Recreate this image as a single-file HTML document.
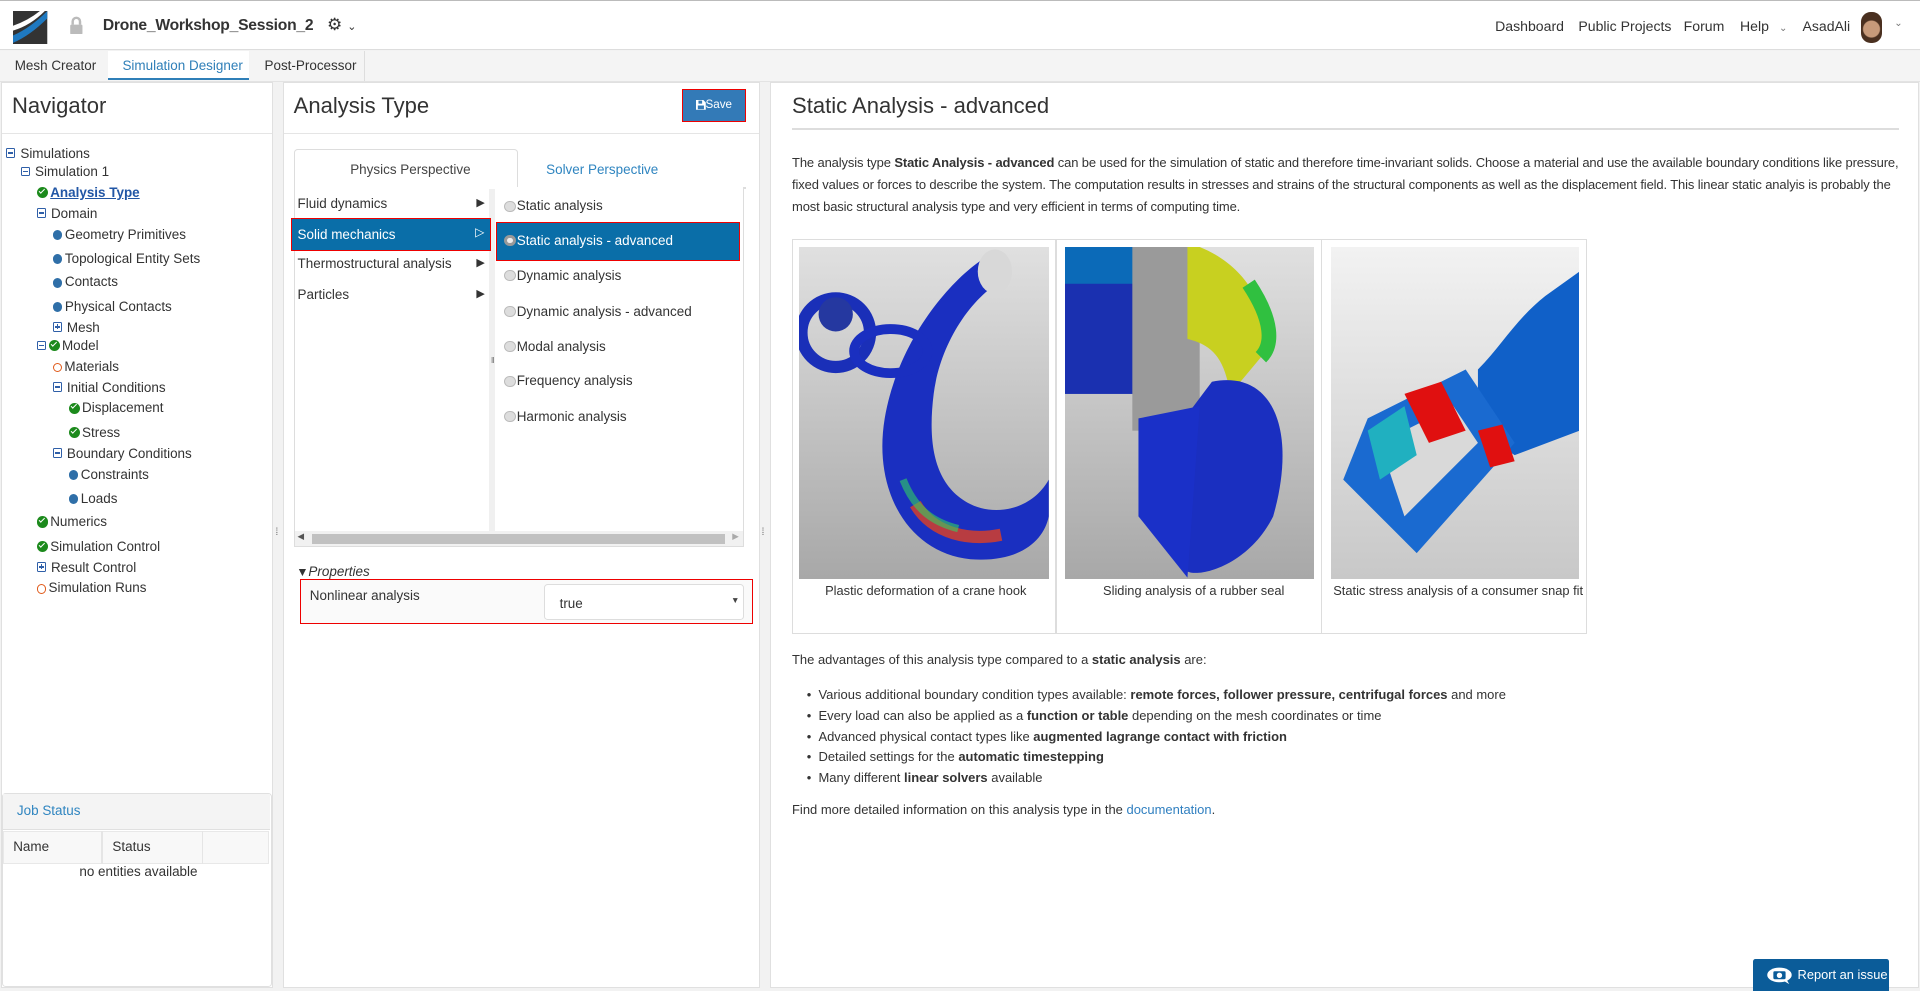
<!DOCTYPE html>
<html><head><meta charset="utf-8">
<style>
html,body{margin:0;padding:0;}
body{width:1568px;height:809px;overflow:hidden;zoom:1.22449;background:#f2f2f2;font-family:"Liberation Sans",sans-serif;font-size:11px;color:#333;position:relative;}
.a{position:absolute;white-space:nowrap;}
.top{position:absolute;left:0;top:0;width:1568px;height:41px;background:#fff;border-bottom:1px solid #ddd;border-top:1px solid #bbb;box-sizing:border-box;}
.tabs{position:absolute;left:0;top:42px;width:1568px;height:24px;background:#f4f4f4;border-bottom:1px solid #e3e3e3;}
.panel{position:absolute;background:#fff;border:1px solid #e0e0e0;box-sizing:border-box;}
.h{font-size:18px;color:#333;}
.ti{position:absolute;white-space:nowrap;font-size:11px;}
.dot{display:inline-block;width:8px;height:8px;border-radius:50%;background:#2f6fa8;vertical-align:-1px;margin-right:2px;}
.ok{display:inline-block;width:9px;height:9px;border-radius:50%;background:#1c8a1c;vertical-align:-1px;margin-right:2px;position:relative;}
.ok:after{content:"";position:absolute;left:2px;top:1.5px;width:4px;height:2px;border-left:1.5px solid #fff;border-bottom:1.5px solid #fff;transform:rotate(-45deg);}
.ring{display:inline-block;width:6px;height:6px;border-radius:50%;border:1.5px solid #e05a1a;vertical-align:-1px;margin-right:2px;}
.mn{display:inline-block;width:6px;height:6px;border:1px solid #2f5fa8;border-radius:1px;vertical-align:0;margin-right:4px;position:relative;}
.mn:after{content:"";position:absolute;left:1px;top:2.5px;width:4px;height:1px;background:#2f5fa8;}
.pl:before{content:"";position:absolute;left:2.5px;top:1px;width:1px;height:4px;background:#2f5fa8;}
.rad{display:inline-block;width:9px;height:9px;border-radius:50%;background:#ddd;border:1px solid #bbb;vertical-align:-1px;margin-right:1px;box-sizing:border-box;}
.img{position:absolute;background:linear-gradient(#e0e0e0,#a8a8a8);overflow:hidden;}
</style></head><body>

<div class="top">
 <svg class="a" style="left:11px;top:8px" width="28" height="27" viewBox="0 0 28 27"><rect width="28" height="27" fill="#333"/><path d="M0 20 Q14 14 28 0 L28 6 Q14 20 0 26Z" fill="#1f79c0"/><path d="M0 12 Q12 8 22 0 L26 0 Q14 12 0 16Z" fill="#fff"/></svg>
 <svg class="a" style="left:56px;top:12px" width="12" height="15" viewBox="0 0 12 15"><path d="M3 7V4.5a3 3 0 0 1 6 0V7" stroke="#bbb" stroke-width="2" fill="none"/><rect x="1" y="7" width="10" height="8" rx="1" fill="#bbb"/></svg>
 <div class="a" style="left:84px;top:13px;font-size:12.8px;font-weight:bold;color:#333;letter-spacing:-0.2px">Drone_Workshop_Session_2</div>
 <div class="a" style="left:267px;top:11px;font-size:14px;color:#333">⚙<span style="font-size:9px;margin-left:4px">⌄</span></div>
 <div class="a" style="left:1221px;top:14px;font-size:11.5px">Dashboard</div>
 <div class="a" style="left:1289px;top:14px;font-size:11.5px">Public Projects</div>
 <div class="a" style="left:1375px;top:14px;font-size:11.5px">Forum</div>
 <div class="a" style="left:1421px;top:14px;font-size:11.5px">Help <span style="font-size:8px;color:#777;margin-left:5px">⌄</span></div>
 <div class="a" style="left:1472px;top:14px;font-size:11.5px">AsadAli</div>
 <div class="a" style="left:1520px;top:9px;width:17px;height:25px;border-radius:8px;background:radial-gradient(circle at 50% 55%,#c79a7a 0 40%,#4a3020 45%)"></div>
 <div class="a" style="left:1547px;top:14px;font-size:8px;color:#777">⌄</div>
</div>

<div class="tabs">
 <div class="a" style="left:12px;top:5px;font-size:11px">Mesh Creator</div>
 <div class="a" style="left:88px;top:0;width:115px;height:22px;background:#fff;border-bottom:2px solid #2f7fb8"></div>
 <div class="a" style="left:100px;top:5px;font-size:11px;color:#2f7fb8">Simulation Designer</div>
 <div class="a" style="left:216px;top:5px;font-size:11px">Post-Processor</div>
 <div class="a" style="left:297px;top:0;width:1px;height:24px;background:#ddd"></div>
</div>

<!-- Navigator -->
<div class="panel" style="left:1px;top:67px;width:222px;height:740px">
 <div class="a h" style="left:8px;top:8px">Navigator</div>
 <div class="a" style="left:0;top:41px;width:220px;height:1px;background:#e5e5e5"></div>
</div>
<div class="ti" style="left:5px;top:119px"><span class="mn"></span>Simulations</div>
<div class="ti" style="left:17px;top:134px"><span class="mn"></span>Simulation 1</div>
<div class="ti" style="left:30px;top:151px"><span class="ok"></span><u style="color:#2156a5;font-weight:bold">Analysis Type</u></div>
<div class="ti" style="left:30px;top:168px"><span class="mn"></span>Domain</div>
<div class="ti" style="left:43px;top:185px"><span class="dot"></span>Geometry Primitives</div>
<div class="ti" style="left:43px;top:205px"><span class="dot"></span>Topological Entity Sets</div>
<div class="ti" style="left:43px;top:224px"><span class="dot"></span>Contacts</div>
<div class="ti" style="left:43px;top:244px"><span class="dot"></span>Physical Contacts</div>
<div class="ti" style="left:43px;top:261px"><span class="mn pl"></span>Mesh</div>
<div class="ti" style="left:30px;top:276px"><span class="mn" style="margin-right:2px"></span><span class="ok"></span>Model</div>
<div class="ti" style="left:43px;top:293px"><span class="ring"></span>Materials</div>
<div class="ti" style="left:43px;top:310px"><span class="mn"></span>Initial Conditions</div>
<div class="ti" style="left:56px;top:327px"><span class="ok"></span>Displacement</div>
<div class="ti" style="left:56px;top:347px"><span class="ok"></span>Stress</div>
<div class="ti" style="left:43px;top:364px"><span class="mn"></span>Boundary Conditions</div>
<div class="ti" style="left:56px;top:381px"><span class="dot"></span>Constraints</div>
<div class="ti" style="left:56px;top:401px"><span class="dot"></span>Loads</div>
<div class="ti" style="left:30px;top:420px"><span class="ok"></span>Numerics</div>
<div class="ti" style="left:30px;top:440px"><span class="ok"></span>Simulation Control</div>
<div class="ti" style="left:30px;top:457px"><span class="mn pl"></span>Result Control</div>
<div class="ti" style="left:30px;top:474px"><span class="ring"></span>Simulation Runs</div>

<!-- Job status -->
<div class="panel" style="left:2px;top:648px;width:220px;height:158px;border-radius:3px">
 <div class="a" style="left:0;top:0;width:218px;height:28px;background:#f4f4f4;border-bottom:1px solid #e0e0e0"></div>
 <div class="a" style="left:11px;top:7px;color:#2f85c0">Job Status</div>
 <div class="a" style="left:0;top:30px;width:217px;height:27px;background:#f8f8f8;border:1px solid #e8e8e8;box-sizing:border-box"></div>
 <div class="a" style="left:80px;top:30px;width:1px;height:27px;background:#e5e5e5"></div>
 <div class="a" style="left:162px;top:30px;width:1px;height:27px;background:#e5e5e5"></div>
 <div class="a" style="left:8px;top:36px">Name</div>
 <div class="a" style="left:89px;top:36px">Status</div>
 <div class="a" style="left:62px;top:57px">no entities available</div>
</div>
<div class="a" style="left:225px;top:430px;font-size:8px;color:#666">⁞</div>
<div class="a" style="left:622px;top:430px;font-size:8px;color:#666">⁞</div>

<!-- Middle panel -->
<div class="panel" style="left:231px;top:67px;width:390px;height:740px">
 <div class="a h" style="left:8px;top:8px">Analysis Type</div>
 <div class="a" style="left:0;top:41px;width:388px;height:1px;background:#e5e5e5"></div>
</div>
<div class="a" style="left:557px;top:73px;width:52px;height:27px;background:#337ab7;border:1.5px solid #e00;color:#fff;font-size:9.5px;text-align:center;line-height:24px;box-sizing:border-box">
 <svg width="8" height="8" viewBox="0 0 8 8" style="vertical-align:-1px"><path d="M0 0H6L8 2V8H0Z" fill="#fff"/><rect x="2" y="0.5" width="3" height="2.5" fill="#337ab7"/><rect x="1.5" y="4.5" width="5" height="3" fill="#337ab7"/></svg>Save</div>
<div class="a" style="left:240px;top:122px;width:183px;height:32px;background:#fff;border:1px solid #ddd;border-bottom:none;border-radius:3px 3px 0 0;box-sizing:border-box"></div>
<div class="a" style="left:286px;top:132px;color:#444">Physics Perspective</div>
<div class="a" style="left:446px;top:132px;color:#2f85c0">Solver Perspective</div>
<div class="a" style="left:423px;top:153px;width:186px;height:1px;background:#ddd"></div>
<div class="a" style="left:240px;top:153px;width:368px;height:294px;border:1px solid #ddd;border-top:none;box-sizing:border-box;background:#fff"></div>
<div class="a" style="left:399px;top:154px;width:5px;height:280px;background:#f0f0f0"></div>
<div class="a" style="left:401px;top:290px;font-size:7px;color:#666">‖</div>
<div class="ti" style="left:243px;top:160px">Fluid dynamics</div><div class="a" style="left:389px;top:160px;font-size:9px">▶</div>
<div class="a" style="left:238px;top:178px;width:163px;height:27px;background:#0a6ea8;border:1.5px solid #e00;box-sizing:border-box"></div>
<div class="ti" style="left:243px;top:185px;color:#fff">Solid mechanics</div><div class="a" style="left:388px;top:184px;font-size:10px;color:#fff">▷</div>
<div class="ti" style="left:243px;top:209px">Thermostructural analysis</div><div class="a" style="left:389px;top:209px;font-size:9px">▶</div>
<div class="ti" style="left:243px;top:234px">Particles</div><div class="a" style="left:389px;top:234px;font-size:9px">▶</div>
<div class="ti" style="left:412px;top:162px"><span class="rad"></span>Static analysis</div>
<div class="a" style="left:405px;top:181px;width:199px;height:32px;background:#0a6ea8;border:1.5px solid #e00;box-sizing:border-box"></div>
<div class="ti" style="left:412px;top:190px;color:#fff"><span class="rad" style="background:#eee;border:2.5px solid #999"></span>Static analysis - advanced</div>
<div class="ti" style="left:412px;top:219px"><span class="rad"></span>Dynamic analysis</div>
<div class="ti" style="left:412px;top:248px"><span class="rad"></span>Dynamic analysis - advanced</div>
<div class="ti" style="left:412px;top:277px"><span class="rad"></span>Modal analysis</div>
<div class="ti" style="left:412px;top:305px"><span class="rad"></span>Frequency analysis</div>
<div class="ti" style="left:412px;top:334px"><span class="rad"></span>Harmonic analysis</div>
<div class="a" style="left:241px;top:434px;width:366px;height:12px;background:#f1f1f1"></div>
<div class="a" style="left:255px;top:436px;width:337px;height:8px;background:#c1c1c1"></div>
<div class="a" style="left:243px;top:434px;font-size:7px;color:#555">◀</div>
<div class="a" style="left:598px;top:434px;font-size:7px;color:#aaa">▶</div>
<div class="ti" style="left:242px;top:461px;font-style:italic"><span style="font-size:10px;font-style:normal">▼</span>Properties</div>
<div class="a" style="left:245px;top:473px;width:370px;height:37px;background:#fafafa;border:1.5px solid #e00;box-sizing:border-box"></div>
<div class="ti" style="left:253px;top:480px">Nonlinear analysis</div>
<div class="a" style="left:444px;top:477px;width:164px;height:29px;background:#fff;border:1px solid #ddd;border-radius:3px;box-sizing:border-box"></div>
<div class="ti" style="left:457px;top:487px">true</div>
<div class="a" style="left:597px;top:486px;font-size:7px;color:#444">▼</div>

<!-- Right panel -->
<div class="panel" style="left:629px;top:67px;width:938px;height:740px">
 <div class="a h" style="left:17px;top:8px">Static Analysis - advanced</div>
 <div class="a" style="left:17px;top:37px;width:904px;height:1px;background:#ddd"></div>
 <div class="a" style="left:17px;top:56px;width:910px;white-space:normal;line-height:18px;font-size:10.6px;letter-spacing:-0.1px">The analysis type <b>Static Analysis - advanced</b> can be used for the simulation of static and therefore time-invariant solids. Choose a material and use the available boundary conditions like pressure, fixed values or forces to describe the system. The computation results in stresses and strains of the structural components as well as the displacement field. This linear static analyis is probably the most basic structural analysis type and very efficient in terms of computing time.</div>
 <div class="a" style="left:17px;top:127px;width:649px;height:323px;border:1px solid #ddd;box-sizing:border-box"></div>
 <div class="a" style="left:232px;top:127px;width:1px;height:323px;background:#ddd"></div>
 <div class="a" style="left:449px;top:127px;width:1px;height:323px;background:#ddd"></div>
 <div class="img" style="left:23px;top:134px;width:204px;height:271px">
  <svg width="204" height="271" viewBox="0 0 204 271"><path d="M150 10 C120 30 80 80 70 140 C60 200 90 250 140 255 C180 258 200 240 204 220 L204 190 C190 215 160 220 140 210 C110 195 105 160 110 120 C115 80 140 40 170 25Z" fill="#1a2fc0"/><ellipse cx="160" cy="20" rx="14" ry="18" fill="#d8d8d8"/><ellipse cx="30" cy="70" rx="28" ry="28" fill="none" stroke="#1a2fb8" stroke-width="10"/><circle cx="30" cy="55" r="14" fill="#2538a0"/><ellipse cx="75" cy="85" rx="30" ry="18" fill="none" stroke="#1a2fc0" stroke-width="8"/><path d="M95 210 C110 235 140 240 165 235" stroke="#e04020" stroke-width="10" fill="none" opacity=".8"/><path d="M85 190 C95 215 110 225 130 230" stroke="#30d060" stroke-width="6" fill="none" opacity=".6"/></svg>
 </div>
 <div class="img" style="left:240px;top:134px;width:203px;height:271px">
  <svg width="203" height="271" viewBox="0 0 203 271"><rect x="0" y="0" width="70" height="120" fill="#1a30b0"/><path d="M0 0 H70 V30 H0Z" fill="#0b6ab8"/><rect x="55" y="0" width="55" height="150" fill="#9a9a9a"/><path d="M110 0 C160 20 170 70 160 90 L135 120 C130 90 120 80 100 75 L100 0Z" fill="#c8d020"/><path d="M150 30 C170 60 170 80 160 90" stroke="#30c040" stroke-width="12" fill="none"/><path d="M120 110 C170 100 190 150 170 220 C150 260 110 270 100 265 L90 150Z" fill="#1a2fc0"/><path d="M60 140 L110 130 L100 270 L60 220Z" fill="#1a30c8"/></svg>
 </div>
 <div class="img" style="left:457px;top:134px;width:203px;height:271px;background:linear-gradient(#f2f2f2,#c8c8c8)">
  <svg width="203" height="271" viewBox="0 0 203 271"><path d="M203 20 L203 150 L150 170 L120 150 L120 100 C140 80 150 60 175 40Z" fill="#1060c8"/><path d="M30 140 L110 100 L150 160 L70 250 L10 190Z" fill="#1a6ad0"/><path d="M40 160 L100 130 L120 160 L60 220Z" fill="#d9d9d9"/><path d="M60 120 L90 110 L110 150 L80 160Z" fill="#e01010"/><path d="M120 150 L140 145 L150 175 L130 180Z" fill="#e01010"/><path d="M30 150 L60 130 L70 170 L40 190Z" fill="#20b0c0"/></svg>
 </div>
 <div class="a" style="left:44px;top:408px;font-size:10.5px">Plastic deformation of a crane hook</div>
 <div class="a" style="left:271px;top:408px;font-size:10.5px">Sliding analysis of a rubber seal</div>
 <div class="a" style="left:459px;top:408px;font-size:10.5px">Static stress analysis of a consumer snap fit</div>
 <div class="a" style="left:17px;top:465px;font-size:10.6px">The advantages of this analysis type compared to a <b>static analysis</b> are:</div>
 <div class="a" style="left:29px;top:492px;font-size:10.6px;line-height:16.8px">
  • &nbsp;Various additional boundary condition types available: <b>remote forces, follower pressure, centrifugal forces</b> and more<br>
  • &nbsp;Every load can also be applied as a <b>function or table</b> depending on the mesh coordinates or time<br>
  • &nbsp;Advanced physical contact types like <b>augmented lagrange contact with friction</b><br>
  • &nbsp;Detailed settings for the <b>automatic timestepping</b><br>
  • &nbsp;Many different <b>linear solvers</b> available</div>
 <div class="a" style="left:17px;top:587px;font-size:10.6px">Find more detailed information on this analysis type in the <span style="color:#2f7fc0">documentation</span>.</div>
</div>
<div class="a" style="left:1432px;top:783px;width:111px;height:26px;background:#0b5c99;border-radius:2px 2px 0 0;color:#fff;font-size:10.5px">
 <svg class="a" style="left:10px;top:7px" width="22" height="14" viewBox="0 0 22 14"><ellipse cx="11" cy="6.5" rx="10" ry="6" fill="#fff"/><path d="M14 11 L19 14 L16 9Z" fill="#fff"/><rect x="6" y="3.5" width="10" height="6.5" rx="1" fill="#0b5c99"/><circle cx="11" cy="6.8" r="2.2" fill="#fff"/></svg>
 <span class="a" style="left:36px;top:7px">Report an issue</span>
</div>
</body></html>
